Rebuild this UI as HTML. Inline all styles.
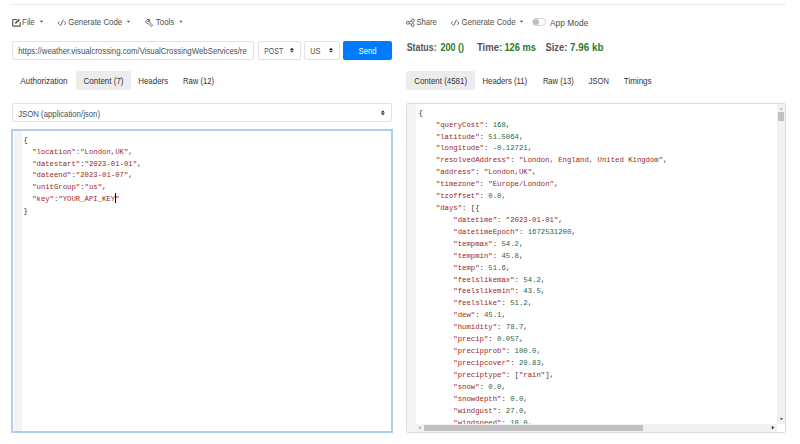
<!DOCTYPE html>
<html><head><meta charset="utf-8">
<style>
*{margin:0;padding:0;box-sizing:border-box}
html,body{width:800px;height:444px;overflow:hidden;background:#fff;font-family:"Liberation Sans",sans-serif}
.a{position:absolute}
.box{position:absolute;border:1px solid #e2e2e2;border-radius:2px;background:#fff}
.tabbg{position:absolute;background:#ececec;border-radius:2px}
.m{position:absolute;font-family:"Liberation Mono",monospace;white-space:pre;color:#333;line-height:20px}
.k{color:#9b1f24}
.n{color:#1f6650}
.u{position:absolute;white-space:pre;line-height:20px}
</style></head><body>
<!-- top line -->
<div class="a" style="left:12px;top:4px;width:774px;height:1px;background:#ebebeb"></div>
<div class="a" style="left:16px;top:6px;width:770px;height:1px;background:#fafafa"></div>

<!-- URL row -->
<div class="box" style="left:12px;top:41px;width:242px;height:19px"></div>
<div class="box" style="left:258px;top:41px;width:42.5px;height:18.6px"></div>
<div class="box" style="left:304px;top:41px;width:36px;height:19px"></div>
<div class="a" style="left:343px;top:41px;width:48.5px;height:18.5px;background:#007bff;border-radius:2px"></div>

<!-- tabs bg -->
<div class="tabbg" style="left:76px;top:71px;width:55px;height:18.6px"></div>
<div class="tabbg" style="left:406px;top:71px;width:68.5px;height:18.6px"></div>

<!-- content type select -->
<div class="box" style="left:12px;top:103px;width:380px;height:19px"></div>

<!-- LEFT editor -->
<div class="a" style="left:11px;top:129px;width:382px;height:304px;border:2px solid #acd0f2;background:#fff"></div>
<div class="a" style="left:14px;top:131px;width:8px;height:300px;background:#f3f3f3"></div>
<div class="m" style="left:23.40px;top:129.66px;font-size:7.29px;transform:scaleY(1.08);transform-origin:0 11.94px">{</div>
<div class="m" style="left:23.40px;top:141.58px;font-size:7.29px;transform:scaleY(1.08);transform-origin:0 11.94px">  <span class="k">&quot;location&quot;</span>:<span class="k">&quot;London,UK&quot;</span>,</div>
<div class="m" style="left:23.40px;top:153.50px;font-size:7.29px;transform:scaleY(1.08);transform-origin:0 11.94px">  <span class="k">&quot;datestart&quot;</span>:<span class="k">&quot;2023-01-01&quot;</span>,</div>
<div class="m" style="left:23.40px;top:165.42px;font-size:7.29px;transform:scaleY(1.08);transform-origin:0 11.94px">  <span class="k">&quot;dateend&quot;</span>:<span class="k">&quot;2023-01-07&quot;</span>,</div>
<div class="m" style="left:23.40px;top:177.34px;font-size:7.29px;transform:scaleY(1.08);transform-origin:0 11.94px">  <span class="k">&quot;unitGroup&quot;</span>:<span class="k">&quot;us&quot;</span>,</div>
<div class="m" style="left:23.40px;top:189.26px;font-size:7.29px;transform:scaleY(1.08);transform-origin:0 11.94px">  <span class="k">&quot;key&quot;</span>:<span class="k">&quot;YOUR_API_KEY&quot;</span></div>
<div class="m" style="left:23.40px;top:201.18px;font-size:7.29px;transform:scaleY(1.08);transform-origin:0 11.94px">}</div>
<div class="a" style="left:115.3px;top:193px;width:1px;height:10px;background:#000"></div>

<!-- toggle -->
<div class="a" style="left:532px;top:17.8px;width:14px;height:8px;border:1px solid #d6d6d6;border-radius:4px;background:#fff"></div>
<div class="a" style="left:532.6px;top:18.7px;width:6.3px;height:6.3px;border-radius:50%;background:#bdbdbd"></div>

<!-- RIGHT editor -->
<div class="a" style="left:406px;top:103px;width:380px;height:330px;border:1px solid #dcdcdc;border-radius:2px;background:#fff"></div>
<div class="a" style="left:407px;top:104px;width:9px;height:328px;background:#f5f5f5"></div>
<div class="a" style="left:407px;top:104px;width:370px;height:320px;overflow:hidden">
<div class="m" style="left:11.40px;top:-1.34px;font-size:7.29px;transform:scaleY(1.08);transform-origin:0 11.94px">{</div>
<div class="m" style="left:11.40px;top:10.58px;font-size:7.29px;transform:scaleY(1.08);transform-origin:0 11.94px">    <span class="k">&quot;queryCost&quot;</span>: <span class="n">168</span>,</div>
<div class="m" style="left:11.40px;top:22.50px;font-size:7.29px;transform:scaleY(1.08);transform-origin:0 11.94px">    <span class="k">&quot;latitude&quot;</span>: <span class="n">51.5064</span>,</div>
<div class="m" style="left:11.40px;top:34.42px;font-size:7.29px;transform:scaleY(1.08);transform-origin:0 11.94px">    <span class="k">&quot;longitude&quot;</span>: <span class="n">-0.12721</span>,</div>
<div class="m" style="left:11.40px;top:46.34px;font-size:7.29px;transform:scaleY(1.08);transform-origin:0 11.94px">    <span class="k">&quot;resolvedAddress&quot;</span>: <span class="k">&quot;London, England, United Kingdom&quot;</span>,</div>
<div class="m" style="left:11.40px;top:58.26px;font-size:7.29px;transform:scaleY(1.08);transform-origin:0 11.94px">    <span class="k">&quot;address&quot;</span>: <span class="k">&quot;London,UK&quot;</span>,</div>
<div class="m" style="left:11.40px;top:70.18px;font-size:7.29px;transform:scaleY(1.08);transform-origin:0 11.94px">    <span class="k">&quot;timezone&quot;</span>: <span class="k">&quot;Europe/London&quot;</span>,</div>
<div class="m" style="left:11.40px;top:82.10px;font-size:7.29px;transform:scaleY(1.08);transform-origin:0 11.94px">    <span class="k">&quot;tzoffset&quot;</span>: <span class="n">0.0</span>,</div>
<div class="m" style="left:11.40px;top:94.02px;font-size:7.29px;transform:scaleY(1.08);transform-origin:0 11.94px">    <span class="k">&quot;days&quot;</span>: [{</div>
<div class="m" style="left:11.40px;top:105.94px;font-size:7.29px;transform:scaleY(1.08);transform-origin:0 11.94px">        <span class="k">&quot;datetime&quot;</span>: <span class="k">&quot;2023-01-01&quot;</span>,</div>
<div class="m" style="left:11.40px;top:117.86px;font-size:7.29px;transform:scaleY(1.08);transform-origin:0 11.94px">        <span class="k">&quot;datetimeEpoch&quot;</span>: <span class="n">1672531200</span>,</div>
<div class="m" style="left:11.40px;top:129.78px;font-size:7.29px;transform:scaleY(1.08);transform-origin:0 11.94px">        <span class="k">&quot;tempmax&quot;</span>: <span class="n">54.2</span>,</div>
<div class="m" style="left:11.40px;top:141.70px;font-size:7.29px;transform:scaleY(1.08);transform-origin:0 11.94px">        <span class="k">&quot;tempmin&quot;</span>: <span class="n">45.8</span>,</div>
<div class="m" style="left:11.40px;top:153.62px;font-size:7.29px;transform:scaleY(1.08);transform-origin:0 11.94px">        <span class="k">&quot;temp&quot;</span>: <span class="n">51.6</span>,</div>
<div class="m" style="left:11.40px;top:165.54px;font-size:7.29px;transform:scaleY(1.08);transform-origin:0 11.94px">        <span class="k">&quot;feelslikemax&quot;</span>: <span class="n">54.2</span>,</div>
<div class="m" style="left:11.40px;top:177.46px;font-size:7.29px;transform:scaleY(1.08);transform-origin:0 11.94px">        <span class="k">&quot;feelslikemin&quot;</span>: <span class="n">43.5</span>,</div>
<div class="m" style="left:11.40px;top:189.38px;font-size:7.29px;transform:scaleY(1.08);transform-origin:0 11.94px">        <span class="k">&quot;feelslike&quot;</span>: <span class="n">51.2</span>,</div>
<div class="m" style="left:11.40px;top:201.30px;font-size:7.29px;transform:scaleY(1.08);transform-origin:0 11.94px">        <span class="k">&quot;dew&quot;</span>: <span class="n">45.1</span>,</div>
<div class="m" style="left:11.40px;top:213.22px;font-size:7.29px;transform:scaleY(1.08);transform-origin:0 11.94px">        <span class="k">&quot;humidity&quot;</span>: <span class="n">78.7</span>,</div>
<div class="m" style="left:11.40px;top:225.14px;font-size:7.29px;transform:scaleY(1.08);transform-origin:0 11.94px">        <span class="k">&quot;precip&quot;</span>: <span class="n">0.057</span>,</div>
<div class="m" style="left:11.40px;top:237.06px;font-size:7.29px;transform:scaleY(1.08);transform-origin:0 11.94px">        <span class="k">&quot;precipprob&quot;</span>: <span class="n">100.0</span>,</div>
<div class="m" style="left:11.40px;top:248.98px;font-size:7.29px;transform:scaleY(1.08);transform-origin:0 11.94px">        <span class="k">&quot;precipcover&quot;</span>: <span class="n">20.83</span>,</div>
<div class="m" style="left:11.40px;top:260.90px;font-size:7.29px;transform:scaleY(1.08);transform-origin:0 11.94px">        <span class="k">&quot;preciptype&quot;</span>: [<span class="k">&quot;rain&quot;</span>],</div>
<div class="m" style="left:11.40px;top:272.82px;font-size:7.29px;transform:scaleY(1.08);transform-origin:0 11.94px">        <span class="k">&quot;snow&quot;</span>: <span class="n">0.0</span>,</div>
<div class="m" style="left:11.40px;top:284.74px;font-size:7.29px;transform:scaleY(1.08);transform-origin:0 11.94px">        <span class="k">&quot;snowdepth&quot;</span>: <span class="n">0.0</span>,</div>
<div class="m" style="left:11.40px;top:296.66px;font-size:7.29px;transform:scaleY(1.08);transform-origin:0 11.94px">        <span class="k">&quot;windgust&quot;</span>: <span class="n">27.0</span>,</div>
<div class="m" style="left:11.40px;top:308.58px;font-size:7.29px;transform:scaleY(1.08);transform-origin:0 11.94px">        <span class="k">&quot;windspeed&quot;</span>: <span class="n">18.0</span>,</div>
<div class="m" style="left:11.40px;top:320.50px;font-size:7.29px;transform:scaleY(1.08);transform-origin:0 11.94px">        <span class="k">&quot;winddir&quot;</span>: <span class="n">231.4</span>,</div>
</div>
<!-- scrollbars -->
<div class="a" style="left:777px;top:104px;width:8px;height:320px;background:#f1f1f1"></div>
<div class="a" style="left:778px;top:112px;width:6px;height:9px;background:#c1c1c1"></div>
<div class="a" style="left:416px;top:424px;width:361px;height:8px;background:#f1f1f1"></div>
<div class="a" style="left:424px;top:425px;width:219px;height:6px;background:#c1c1c1"></div>
<div class="a" style="left:777px;top:424px;width:8px;height:8px;background:#fff"></div>

<svg class="a" style="left:0;top:0" width="800" height="444" viewBox="0 0 800 444">
 <g fill="none" stroke="#555">
  <!-- edit icon -->
  <path d="M17 19.5H13.1Q12.75 19.5 12.75 19.85V25.85Q12.75 26.2 13.1 26.2H19.85Q20.2 26.2 20.2 25.85V22.2" stroke-width="1.2"/>
  <path d="M15.3 23.4L19.5 19.3" stroke-width="1.7"/>
  <!-- code icons -->
  <path d="M59.6 21.5L58 23.1l1.6 1.6M64.2 21.5l1.6 1.6-1.6 1.6M60.5 25.8L63.3 19.7" stroke-width="0.9"/>
  <path d="M452.8 21.5L451.2 23.1l1.6 1.6M457.4 21.5l1.6 1.6-1.6 1.6M453.7 25.8L456.5 19.7" stroke-width="0.9"/>
  <!-- tools -->
  <path d="M147.3 19.4H149.7V22.4L152.7 25.3L151.3 26.5L148.4 23.8Q146.2 23.5 145.3 21.6L146.3 20.6L148.2 21.8L148.6 20.6Z" stroke-width="0.85" stroke-linejoin="round"/>
  <!-- share -->
  <circle cx="407.9" cy="22.7" r="1.5" stroke-width="0.9"/>
  <circle cx="412.8" cy="20.5" r="1.5" stroke-width="0.9"/>
  <circle cx="412.6" cy="25" r="1.5" stroke-width="0.9"/>
  <path d="M409.2 22.1L411.4 21.1M409.2 23.3L411.3 24.3" stroke-width="0.8"/>
 </g>
 <g fill="#555">
  <path d="M39.8 20.8H43.2L41.5 22.8Z"/>
  <path d="M126.8 20.8H130.2L128.5 22.8Z"/>
  <path d="M179.2 20.8H182.6L180.9 22.8Z"/>
  <path d="M519.8 20.8H523.2L521.5 22.8Z"/>
 </g>
 <g fill="#222">
  <path d="M289.90 49.90H293.90L291.90 47.80Z M290.00 50.70H293.80L291.90 52.60Z"/>
  <path d="M328.95 49.90H332.95L330.95 47.80Z M329.05 50.70H332.85L330.95 52.60Z"/>
  <path d="M380.85 112.50H384.85L382.85 110.40Z M380.95 113.30H384.75L382.85 115.20Z"/>
 </g>
 <g fill="#9a9a9a">
  <path d="M779.9 109.4H782.8L781.35 107.9Z"/>
  <path d="M418.5 427.8L420.6 426.3V429.3Z"/>
 </g>
 <g fill="#383838">
  <path d="M779.6 418.2H783.1L781.35 420Z"/>
  <path d="M771.8 425.8L774.4 427.7L771.8 429.6Z"/>
 </g>
</svg>
<div class="u" style="left:22.12px;top:13.29px;font-size:7.82px;font-weight:400;color:#505050;transform:scaleY(1.0936119922871186);transform-origin:0 12.71px">File</div>
<div class="u" style="left:68.36px;top:13.27px;font-size:7.89px;font-weight:400;color:#505050;transform:scaleY(1.0843251939411291);transform-origin:0 12.73px">Generate Code</div>
<div class="u" style="left:155.84px;top:13.26px;font-size:7.89px;font-weight:400;color:#505050;transform:scaleY(1.0830917874396135);transform-origin:0 12.74px">Tools</div>
<div class="u" style="left:18.25px;top:42.08px;font-size:7.84px;font-weight:400;color:#495057;transform:scaleY(1.0905924230867023);transform-origin:0 12.72px">https://weather.visualcrossing.com/VisualCrossingWebServices/re</div>
<div class="u" style="left:264.24px;top:41.89px;font-size:6.95px;font-weight:400;color:#495057;transform:scaleY(1.230928491798058);transform-origin:0 12.41px">POST</div>
<div class="u" style="left:310.32px;top:41.77px;font-size:7.30px;font-weight:400;color:#495057;transform:scaleY(1.1710775047258923);transform-origin:0 12.53px">US</div>
<div class="u" style="left:358.51px;top:41.63px;font-size:7.70px;font-weight:400;color:#fff;transform:scaleY(1.1100940757691318);transform-origin:0 12.67px">Send</div>
<div class="u" style="left:20.20px;top:71.98px;font-size:8.13px;font-weight:400;color:#333;transform:scaleY(1.0519761441241002);transform-origin:0 12.82px">Authorization</div>
<div class="u" style="left:83.50px;top:72.03px;font-size:8.00px;font-weight:400;color:#333;transform:scaleY(1.0693873012342938);transform-origin:0 12.77px">Content (7)</div>
<div class="u" style="left:138.27px;top:72.06px;font-size:7.90px;font-weight:400;color:#333;transform:scaleY(1.0828945388897246);transform-origin:0 12.74px">Headers</div>
<div class="u" style="left:183.09px;top:72.14px;font-size:7.67px;font-weight:400;color:#333;transform:scaleY(1.1144444444444448);transform-origin:0 12.66px">Raw (12)</div>
<div class="u" style="left:18.14px;top:104.59px;font-size:7.81px;font-weight:400;color:#495057;transform:scaleY(1.0945767902289643);transform-origin:0 12.71px">JSON (application/json)</div>
<div class="u" style="left:416.52px;top:13.36px;font-size:7.63px;font-weight:400;color:#505050;transform:scaleY(1.1211919550428857);transform-origin:0 12.64px">Share</div>
<div class="u" style="left:461.50px;top:13.26px;font-size:7.92px;font-weight:400;color:#505050;transform:scaleY(1.0802602447604686);transform-origin:0 12.74px">Generate Code</div>
<div class="u" style="left:550.00px;top:13.08px;font-size:8.43px;font-weight:400;color:#505050;transform:scaleY(1.014836003051106);transform-origin:0 12.92px">App Mode</div>
<div class="u" style="left:406.63px;top:38.43px;font-size:8.85px;font-weight:700;color:#555;transform:scaleY(1.179112350237359);transform-origin:0 13.07px">Status:</div>
<div class="u" style="left:440.43px;top:38.38px;font-size:9.00px;font-weight:700;color:#2b7a2b;transform:scaleY(1.1594202898550727);transform-origin:0 13.12px">200 ()</div>
<div class="u" style="left:476.90px;top:38.20px;font-size:9.53px;font-weight:700;color:#555;transform:scaleY(1.0952209845490486);transform-origin:0 13.30px">Time:</div>
<div class="u" style="left:504.44px;top:38.28px;font-size:9.30px;font-weight:700;color:#2b7a2b;transform:scaleY(1.121909633418584);transform-origin:0 13.22px">126 ms</div>
<div class="u" style="left:545.52px;top:38.27px;font-size:9.32px;font-weight:700;color:#555;transform:scaleY(1.1194596876319114);transform-origin:0 13.23px">Size:</div>
<div class="u" style="left:570.11px;top:38.10px;font-size:9.82px;font-weight:700;color:#2b7a2b;transform:scaleY(1.062742474916388);transform-origin:0 13.40px">7.96 kb</div>
<div class="u" style="left:414.20px;top:72.05px;font-size:7.93px;font-weight:400;color:#333;transform:scaleY(1.078706800445931);transform-origin:0 12.75px">Content (4581)</div>
<div class="u" style="left:482.48px;top:72.11px;font-size:7.76px;font-weight:400;color:#333;transform:scaleY(1.1021805610955986);transform-origin:0 12.69px">Headers (11)</div>
<div class="u" style="left:542.89px;top:72.16px;font-size:7.62px;font-weight:400;color:#333;transform:scaleY(1.121923937360181);transform-origin:0 12.64px">Raw (13)</div>
<div class="u" style="left:588.85px;top:72.20px;font-size:7.51px;font-weight:400;color:#333;transform:scaleY(1.138619809266354);transform-origin:0 12.60px">JSON</div>
<div class="u" style="left:623.84px;top:72.03px;font-size:8.01px;font-weight:400;color:#333;transform:scaleY(1.0680575463184179);transform-origin:0 12.77px">Timings</div>
</body></html>
